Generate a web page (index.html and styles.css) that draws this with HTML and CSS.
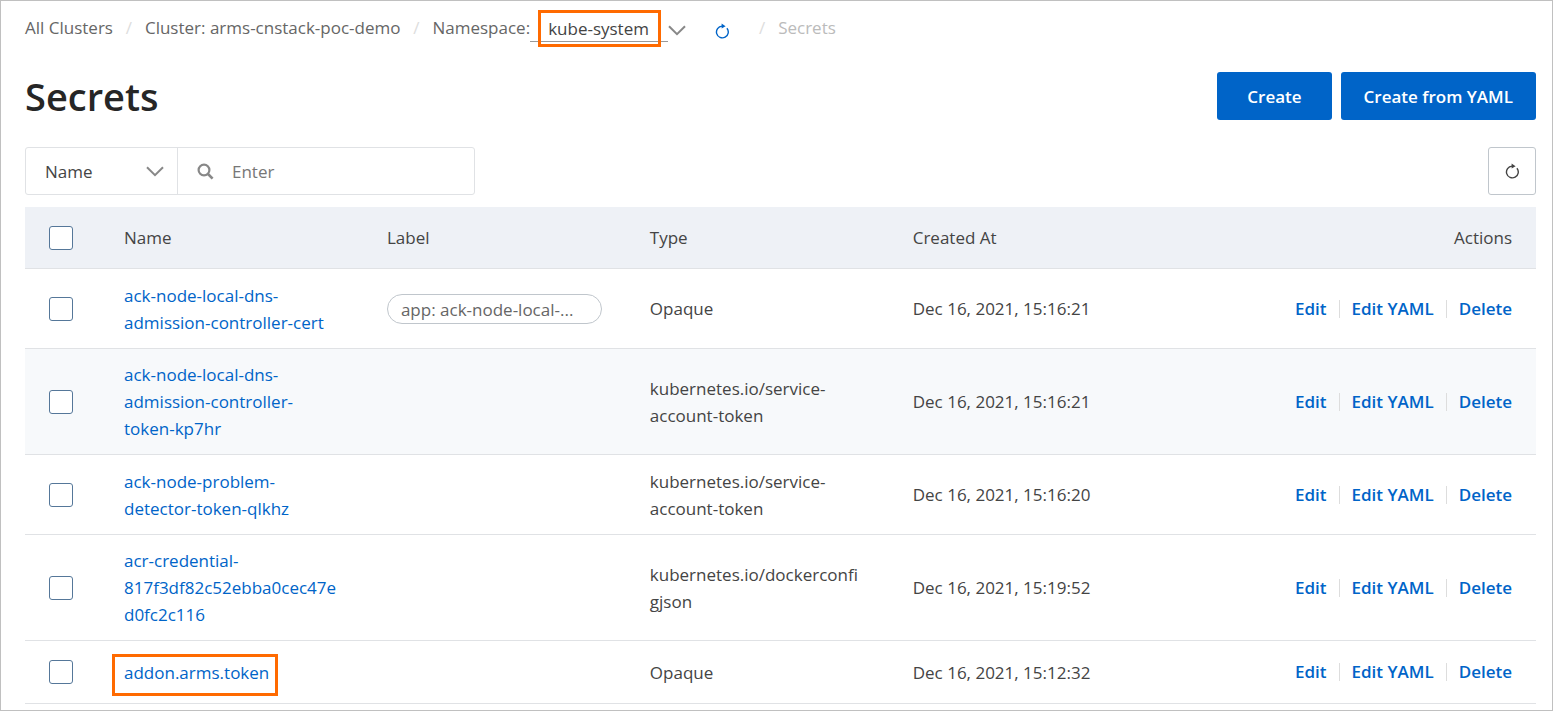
FILE: index.html
```html
<!DOCTYPE html>
<html lang="en">
<head>
<meta charset="utf-8">
<title>Secrets</title>
<link rel="stylesheet" href="styles.css">
</head>
<body>
<svg class="sprite" aria-hidden="true">
  <symbol id="chevron" viewBox="0 0 18 11"><path d="M1 1.2 9 9.2 17 1.2" fill="none" stroke="currentColor" stroke-width="2"/></symbol>
  <symbol id="refresh" viewBox="0 0 14 16"><path d="M11.9 5.2A5.9 5.9 0 1 1 7 3.1" fill="none" stroke="currentColor" stroke-width="1.4"/><path d="M6.6.6 10.6 3.3 6.6 5.6Z" fill="currentColor"/></symbol>
  <symbol id="search" viewBox="0 0 17 17"><circle cx="7" cy="7" r="5.4" fill="none" stroke="currentColor" stroke-width="2.2"/><path d="M11 11 15.6 15.6" stroke="currentColor" stroke-width="2.6"/></symbol>
</svg>
<main class="page">
  <nav class="breadcrumb" aria-label="Breadcrumb">
    <a href="#">All Clusters</a>
    <span class="slash">/</span>
    <a href="#">Cluster: arms-cnstack-poc-demo</a>
    <span class="slash">/</span>
    <div class="namespace">
      <label for="namespace">Namespace:</label>
      <div class="namespace-picker">
        <select id="namespace"><option>kube-system</option></select>
      </div>
      <svg class="chevron" aria-hidden="true"><use href="#chevron"/></svg>
      <button class="reload" type="button" aria-label="Refresh namespaces"><svg class="refresh" aria-hidden="true"><use href="#refresh"/></svg></button>
    </div>
    <span class="slash">/</span>
    <span class="current">Secrets</span>
  </nav>

  <header class="heading">
    <h1>Secrets</h1>
    <div class="buttons">
      <button class="primary" type="button">Create</button>
      <button class="primary wide" type="button">Create from YAML</button>
    </div>
  </header>

  <div class="toolbar">
    <div class="filter">
      <div class="filter-field">
        <select aria-label="Filter field"><option>Name</option></select>
        <svg class="chevron" aria-hidden="true"><use href="#chevron"/></svg>
      </div>
      <label class="search">
        <svg class="search-icon" aria-hidden="true"><use href="#search"/></svg>
        <input type="text" placeholder="Enter" aria-label="Search">
      </label>
    </div>
    <button class="square" type="button" aria-label="Refresh"><svg class="refresh" aria-hidden="true"><use href="#refresh"/></svg></button>
  </div>

  <table class="secrets">
    <colgroup><col class="col-check"><col class="col-data"><col class="col-data"><col class="col-data"><col class="col-data"><col></colgroup>
    <thead>
      <tr>
        <th><input type="checkbox" aria-label="Select all"></th>
        <th>Name</th><th>Label</th><th>Type</th><th>Created At</th><th class="end">Actions</th>
      </tr>
    </thead>
    <tbody>
      <tr>
        <td><input type="checkbox" aria-label="Select row"></td>
        <td><a href="#">ack-node-local-dns-admission-controller-cert</a></td>
        <td><span class="tag">app: ack-node-local-...</span></td>
        <td>Opaque</td>
        <td>Dec 16, 2021, 15:16:21</td>
        <td><div class="actions"><a href="#">Edit</a><a href="#">Edit YAML</a><a href="#">Delete</a></div></td>
      </tr>
      <tr class="shaded">
        <td><input type="checkbox" aria-label="Select row"></td>
        <td><a href="#">ack-node-local-dns-admission-controller-<wbr>token-kp7hr</a></td>
        <td></td>
        <td>kubernetes.io/service-account-token</td>
        <td>Dec 16, 2021, 15:16:21</td>
        <td><div class="actions"><a href="#">Edit</a><a href="#">Edit YAML</a><a href="#">Delete</a></div></td>
      </tr>
      <tr>
        <td><input type="checkbox" aria-label="Select row"></td>
        <td><a href="#">ack-node-problem-detector-token-qlkhz</a></td>
        <td></td>
        <td>kubernetes.io/service-account-token</td>
        <td>Dec 16, 2021, 15:16:20</td>
        <td><div class="actions"><a href="#">Edit</a><a href="#">Edit YAML</a><a href="#">Delete</a></div></td>
      </tr>
      <tr>
        <td><input type="checkbox" aria-label="Select row"></td>
        <td><a href="#">acr-credential-<wbr>817f3df82c52ebba0cec47e<wbr>d0fc2c116</a></td>
        <td></td>
        <td>kubernetes.io/dockerconfi<wbr>gjson</td>
        <td>Dec 16, 2021, 15:19:52</td>
        <td><div class="actions"><a href="#">Edit</a><a href="#">Edit YAML</a><a href="#">Delete</a></div></td>
      </tr>
      <tr class="short">
        <td><input type="checkbox" aria-label="Select row"></td>
        <td><a class="marked" href="#">addon.arms.token</a></td>
        <td></td>
        <td>Opaque</td>
        <td>Dec 16, 2021, 15:12:32</td>
        <td><div class="actions"><a href="#">Edit</a><a href="#">Edit YAML</a><a href="#">Delete</a></div></td>
      </tr>
    </tbody>
  </table>
</main>
</body>
</html>
```
FILE: styles.css
```css
* { box-sizing: border-box; }
body {
  margin: 0;
  background: #fff;
  color: #444;
  font: 17px/27px "Open Sans", "Noto Sans", sans-serif;
}
a { color: #0064c8; text-decoration: none; }
button, select, input { font: inherit; color: inherit; margin: 0; }
button { cursor: pointer; }
select { appearance: none; border: 0; background: none; border-radius: 0; }
.sprite { position: absolute; width: 0; height: 0; }
.page { min-height: 100vh; padding: 7px 16px 6px 24px; border: 1px solid #c0c0c0; }

.chevron { width: 18px; height: 11px; flex: none; color: #888; }
.refresh { width: 14px; height: 16px; display: block; }

.breadcrumb { display: flex; align-items: center; height: 38px; color: #666; white-space: nowrap; }
.breadcrumb a { color: inherit; }
.slash { width: 32px; text-align: center; color: #ddd; }
.namespace { display: flex; align-items: center; }
.namespace-picker { position: relative; width: 138px; border-bottom: 1px solid #999; }
.namespace-picker select { display: block; width: 100%; height: 29px; padding: 3px 0 0 18px; color: #444; }
.namespace-picker::after,
.marked::after {
  content: "";
  position: absolute;
  border: 3px solid #ff6a00;
  pointer-events: none;
}
.namespace-picker::after { inset: -2px 7px -6px 8px; }
.namespace .chevron { margin-top: 6px; }
.reload { margin: 8px 17px 0 29px; padding: 0; border: 0; background: none; color: #0064c8; }
.current { color: #bbb; }

.heading { display: flex; justify-content: space-between; align-items: center; height: 48px; margin-top: 26px; }
h1 { margin: 0; font-size: 38px; line-height: 48px; font-weight: 600; color: #262626; }
.buttons { display: flex; gap: 9px; }
.primary { height: 48px; padding: 0 30px; border: 0; border-radius: 3px; background: #0064c8; color: #fff; font-weight: 600; }
.wide { padding: 0 23px; }

.toolbar { display: flex; justify-content: space-between; margin-top: 27px; }
.filter { display: flex; width: 450px; height: 48px; border: 1px solid #e0e2e5; border-radius: 3px; }
.filter-field { position: relative; display: flex; align-items: center; width: 152px; border-right: 1px solid #e0e2e5; }
.filter-field select { width: 100%; height: 100%; padding: 0 0 0 19px; }
.filter-field .chevron { position: absolute; right: 13px; pointer-events: none; }
.search { display: flex; flex: 1; align-items: center; gap: 18px; padding-left: 19px; }
.search input { flex: 1; min-width: 0; padding: 0; border: 0; outline: 0; background: none; }
.search input::placeholder { color: #777; opacity: 1; }
.search-icon { width: 17px; height: 17px; color: #888; }
.square { display: flex; align-items: center; justify-content: center; width: 48px; height: 48px; padding: 0; border: 1px solid #c0c6cc; border-radius: 3px; background: #fff; }

.secrets { width: 100%; margin-top: 12px; border-collapse: separate; border-spacing: 0; table-layout: fixed; }
.col-check { width: 75px; }
.col-data { width: 17.4%; }
th, td { padding: 12px 24px; border-bottom: 1px solid #e0e2e5; text-align: left; vertical-align: middle; overflow-wrap: break-word; }
th { height: 62px; background: #eef1f6; font-weight: 400; }
td { height: 80px; }
.short td { height: 63px; }
.end { text-align: right; }
.shaded td { background: #f7f9fb; }
input[type="checkbox"] { appearance: none; display: block; width: 24px; height: 24px; border: 1px solid #557799; border-radius: 3px; background: #fff; }
.tag { display: block; height: 30px; padding: 0 13px; border: 1px solid #c0c6cc; border-radius: 15px; background: #fff; color: #666; line-height: 30px; white-space: nowrap; }
.actions { display: flex; justify-content: flex-end; align-items: center; white-space: nowrap; font-weight: 600; }
.actions a { line-height: 18px; }
.actions a + a { margin-left: 12px; padding-left: 12px; border-left: 1px solid #ddd; }
.marked { position: relative; }
.marked::after { inset: -7px -9px -12px -12px; }
```
